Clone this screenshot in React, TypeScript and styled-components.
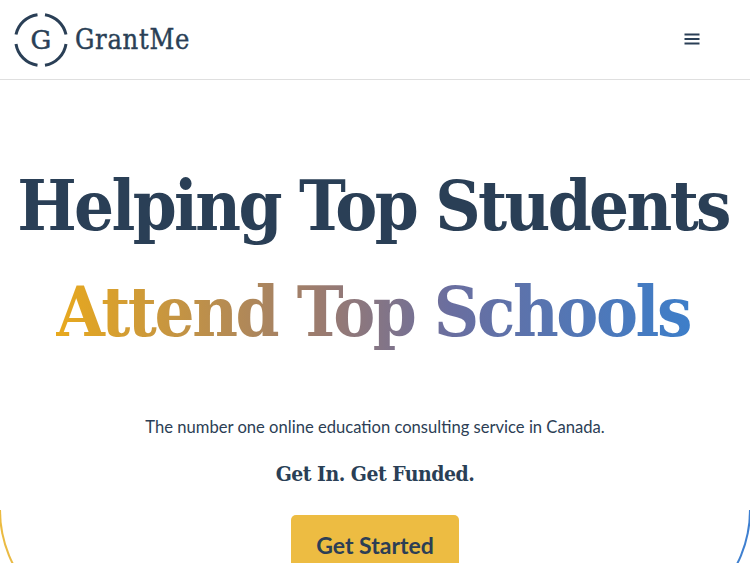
import React from 'react';
import styled, { createGlobalStyle } from 'styled-components';

const GlobalStyle = createGlobalStyle`
  html, body {
    margin: 0;
    height: 100%;
    overflow: hidden;
    background: #fff;
  }
  body {
    font-family: Lato, "Liberation Sans", sans-serif;
    color: #2c3e55;
  }
`;

const Page = styled.div`
  height: 563px;
  overflow: hidden;
`;

const Header = styled.header`
  height: 77px;
  display: flex;
  align-items: center;
  justify-content: space-between;
  padding: 0 50px 2px 14px;
  border-bottom: 1px solid #dfdfdf;
`;

const Logo = styled.a`
  display: flex;
  align-items: center;
  gap: 7px;
  margin-top: 2px;
`;

const LogoText = styled.span`
  font-family: "DejaVu Serif", serif;
  font-stretch: condensed;
  font-size: 27px;
  letter-spacing: 0.7px;
  -webkit-text-stroke: 0.4px #2a3f56;
  color: #2a3f56;
`;

const MenuButton = styled.button`
  display: flex;
  padding: 0;
  border: 0;
  background: none;
  color: #2a3f56;
`;

const Hero = styled.section`
  position: relative;
  height: 483px;
  display: flex;
  flex-direction: column;
  align-items: center;
  padding-top: 73px;
  box-sizing: border-box;
  overflow: hidden;

  /* decorative gradient arc behind the button */
  &::before {
    content: '';
    position: absolute;
    left: -1px;
    right: -1px;
    top: 430px;
    height: 120px;
    box-sizing: border-box;
    border: 2px solid transparent;
    border-top: 0;
    border-radius: 0 0 120px 120px;
    background:
      linear-gradient(#fff, #fff) padding-box,
      linear-gradient(90deg, #ecbb41, #3d7fd1) border-box;
  }
`;

const Title = styled.h1`
  margin: 0;
  padding-right: 4px;
  font-family: "DejaVu Serif", serif;
  font-stretch: condensed;
  font-size: 70px;
  line-height: 106px;
  font-weight: 700;
  letter-spacing: -2.65px;
  white-space: nowrap;
  text-align: center;
  color: #2a3f56;
`;

const GradientLine = styled.span`
  display: block;
  width: fit-content;
  margin: 0 auto;
  letter-spacing: -2.4px;
  background: linear-gradient(90deg, #e8a91d 0%, #9a7b70 42%, #6a6e9f 62%, #3d7ec9 100%);
  -webkit-background-clip: text;
  background-clip: text;
  color: transparent;
`;

const Lead = styled.p`
  position: relative;
  margin: 50px 0 0;
  font-size: 16.6px;
  line-height: 24px;
  color: #2c3e55;
`;

const Tagline = styled.p`
  position: relative;
  margin: 21px 0 0;
  font-family: "DejaVu Serif", serif;
  font-stretch: condensed;
  font-size: 21px;
  line-height: 28px;
  font-weight: 700;
  letter-spacing: -0.5px;
  color: #2a3f56;
`;

const CtaButton = styled.button`
  position: relative;
  width: 168px;
  height: 60px;
  margin-top: 27px;
  flex-shrink: 0;
  border: 0;
  border-radius: 5px;
  background: #edbc42;
  color: #2c3e55;
  font-family: Lato, sans-serif;
  font-size: 23px;
  font-weight: 700;
`;

const App: React.FC = () => (
  <Page>
    <GlobalStyle />
    <Header>
      <Logo>
        <svg width="54" height="54" viewBox="0 0 54 54" fill="none" stroke="#2a3f56" strokeWidth="3">
          <path d="M23.5 1.7A25.5 25.5 0 0 0 2 21.5" />
          <path d="M31 1.7A25.5 25.5 0 0 1 52 21.5" />
          <path d="M2 31A25.5 25.5 0 0 0 23.5 52.3" />
          <path d="M52 31A25.5 25.5 0 0 1 31 52.3" />
          <text x="27" y="35.5" textAnchor="middle" fontFamily="DejaVu Serif, serif" fontSize="26" fill="#2a3f56" stroke="#2a3f56" strokeWidth="0.5">G</text>
        </svg>
        <LogoText>GrantMe</LogoText>
      </Logo>
      <MenuButton aria-label="Menu">
        <svg width="16" height="12" viewBox="0 0 16 12" fill="currentColor">
          <rect x="0.5" y="0.5" width="15" height="2" />
          <rect x="0.5" y="5" width="15" height="2" />
          <rect x="0.5" y="9.5" width="15" height="2" />
        </svg>
      </MenuButton>
    </Header>
    <Hero>
      <Title>
        Helping Top Students
        <GradientLine>Attend Top Schools</GradientLine>
      </Title>
      <Lead>The number one online education consulting service in Canada.</Lead>
      <Tagline>Get In. Get Funded.</Tagline>
      <CtaButton>Get Started</CtaButton>
    </Hero>
  </Page>
);

export default App;
